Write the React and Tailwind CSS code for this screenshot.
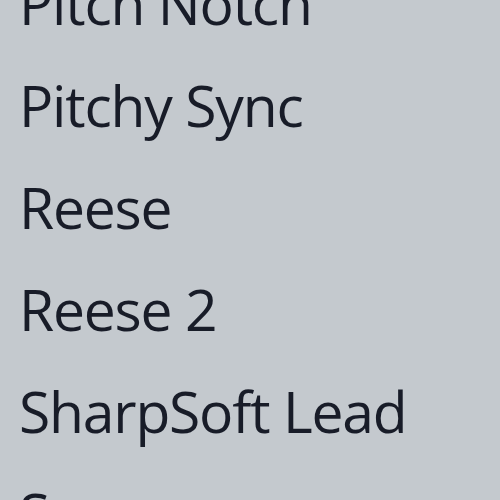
export default function App() {
  const items = ["Pitch Notch", "Pitchy Sync", "Reese", "Reese 2", "SharpSoft Lead", "Screamer"];
  return (
    <div className="w-[500px] h-[500px] overflow-hidden bg-[#c4c9ce]">
      <div className="-mt-[48px] flex flex-col pl-[19px]" style={{ fontFamily: '"Open Sans", "Noto Sans", sans-serif' }}>
        {items.map((t) => (
          <div key={t} className="h-[102px] leading-[102px] text-[57px] tracking-[-1.2px] text-[#181c28] whitespace-nowrap">
            {t}
          </div>
        ))}
      </div>
    </div>
  );
}
